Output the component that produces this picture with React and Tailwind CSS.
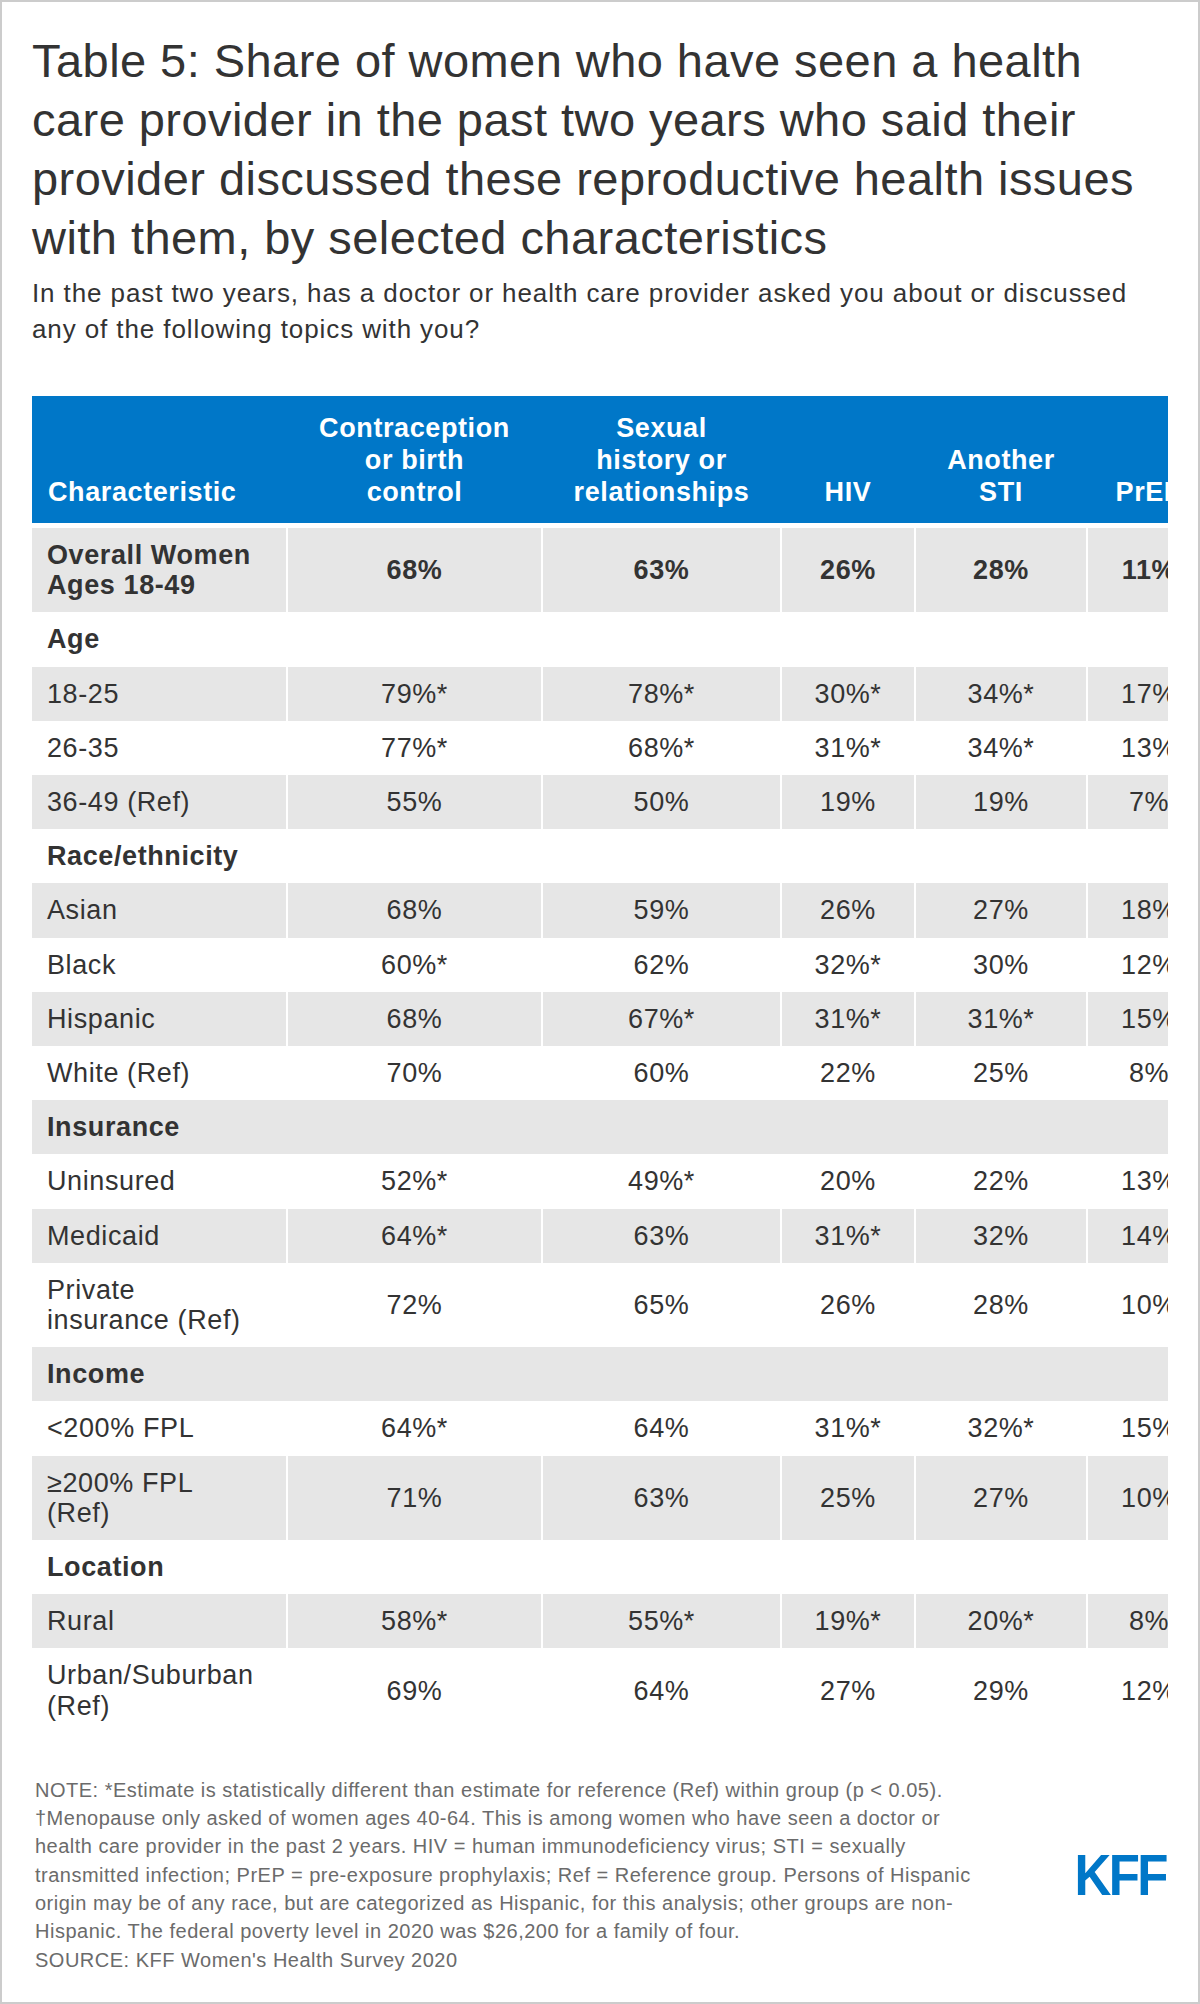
const rows = [
  { label: ["Overall Women", "Ages 18-49"], values: ["68%", "63%", "26%", "28%", "11%"], bold: true },
  { group: "Age" },
  { label: ["18-25"], values: ["79%*", "78%*", "30%*", "34%*", "17%"] },
  { label: ["26-35"], values: ["77%*", "68%*", "31%*", "34%*", "13%"] },
  { label: ["36-49 (Ref)"], values: ["55%", "50%", "19%", "19%", "7%"] },
  { group: "Race/ethnicity" },
  { label: ["Asian"], values: ["68%", "59%", "26%", "27%", "18%"] },
  { label: ["Black"], values: ["60%*", "62%", "32%*", "30%", "12%"] },
  { label: ["Hispanic"], values: ["68%", "67%*", "31%*", "31%*", "15%"] },
  { label: ["White (Ref)"], values: ["70%", "60%", "22%", "25%", "8%"] },
  { group: "Insurance" },
  { label: ["Uninsured"], values: ["52%*", "49%*", "20%", "22%", "13%"] },
  { label: ["Medicaid"], values: ["64%*", "63%", "31%*", "32%", "14%"] },
  { label: ["Private", "insurance (Ref)"], values: ["72%", "65%", "26%", "28%", "10%"] },
  { group: "Income" },
  { label: ["<200% FPL"], values: ["64%*", "64%", "31%*", "32%*", "15%"] },
  { label: ["≥200% FPL", "(Ref)"], values: ["71%", "63%", "25%", "27%", "10%"] },
  { group: "Location" },
  { label: ["Rural"], values: ["58%*", "55%*", "19%*", "20%*", "8%"] },
  { label: ["Urban/Suburban", "(Ref)"], values: ["69%", "64%", "27%", "29%", "12%"] },
];

const headers = [
  ["Contraception", "or birth", "control"],
  ["Sexual", "history or", "relationships"],
  ["HIV"],
  ["Another", "STI"],
  ["PrEP"],
];

const grid = "grid grid-cols-[254px_253px_237px_132px_170px_122px] gap-x-[2px] w-[1178px]";

function Lines({ lines }) {
  return lines.map((l, i) => (
    <span key={i} className="block whitespace-nowrap">
      {l}
    </span>
  ));
}

function Row({ row, gray }) {
  const bg = gray ? "bg-[#e6e6e6]" : "bg-white";
  if (row.group) {
    return (
      <div className={grid}>
        <div className={`col-span-6 ${bg} pl-[15px] py-3 leading-[30.2px] font-bold`}>{row.group}</div>
      </div>
    );
  }
  const weight = row.bold ? "font-bold" : "";
  return (
    <div className={grid}>
      <div className={`${bg} ${weight} pl-[15px] py-3 leading-[30.2px] flex flex-col justify-center`}>
        <Lines lines={row.label} />
      </div>
      {row.values.map((v, i) => (
        <div key={i} className={`${bg} ${weight} py-3 leading-[30.2px] flex items-center justify-center whitespace-nowrap`}>
          {v}
        </div>
      ))}
    </div>
  );
}

export default function App() {
  return (
    <div className="w-[1200px] h-[2004px] border-2 border-[#cccccc] bg-white px-[30px] pt-[29px] font-['Liberation_Sans',Arial,sans-serif] text-[#333333]">
      <h1 className="text-[47px] leading-[59px] tracking-[0.45px] font-normal">
        <Lines
          lines={[
            "Table 5: Share of women who have seen a health",
            "care provider in the past two years who said their",
            "provider discussed these reproductive health issues",
            "with them, by selected characteristics",
          ]}
        />
      </h1>
      <p className="mt-[8px] text-[26px] leading-[36px] tracking-[0.9px]">
        <Lines
          lines={[
            "In the past two years, has a doctor or health care provider asked you about or discussed",
            "any of the following topics with you?",
          ]}
        />
      </p>

      <div className="mt-[49px] w-[1136px] overflow-hidden text-[27px] tracking-[0.6px]">
        <div className={`${grid} bg-[#0077c8] h-[127px] text-white font-bold leading-[32px]`}>
          <div className="pl-4 pb-[15px] flex flex-col justify-end">Characteristic</div>
          {headers.map((h, i) => (
            <div key={i} className="pb-[15px] flex flex-col justify-end items-center text-center">
              <Lines lines={h} />
            </div>
          ))}
        </div>
        <div className="mt-[5px]">
          {rows.map((r, i) => (
            <Row key={i} row={r} gray={i % 2 === 0} />
          ))}
        </div>
      </div>

      <div className="mt-[43px] flex items-center justify-between w-[1136px]">
        <div className="pl-[3px] text-[20px] leading-[28.3px] tracking-[0.5px] text-[#6b6b6b]">
          <Lines
            lines={[
              "NOTE: *Estimate is statistically different than estimate for reference (Ref) within group (p < 0.05).",
              "†Menopause only asked of women ages 40-64. This is among women who have seen a doctor or",
              "health care provider in the past 2 years. HIV = human immunodeficiency virus; STI = sexually",
              "transmitted infection; PrEP = pre-exposure prophylaxis; Ref = Reference group. Persons of Hispanic",
              "origin may be of any race, but are categorized as Hispanic, for this analysis; other groups are non-",
              "Hispanic. The federal poverty level in 2020 was $26,200 for a family of four.",
              "SOURCE: KFF Women's Health Survey 2020",
            ]}
          />
        </div>
        <div className="mr-[2px] text-[58px] leading-none font-bold text-[#0077c8] tracking-[-3px] scale-x-[0.88] origin-right">
          KFF
        </div>
      </div>
    </div>
  );
}
